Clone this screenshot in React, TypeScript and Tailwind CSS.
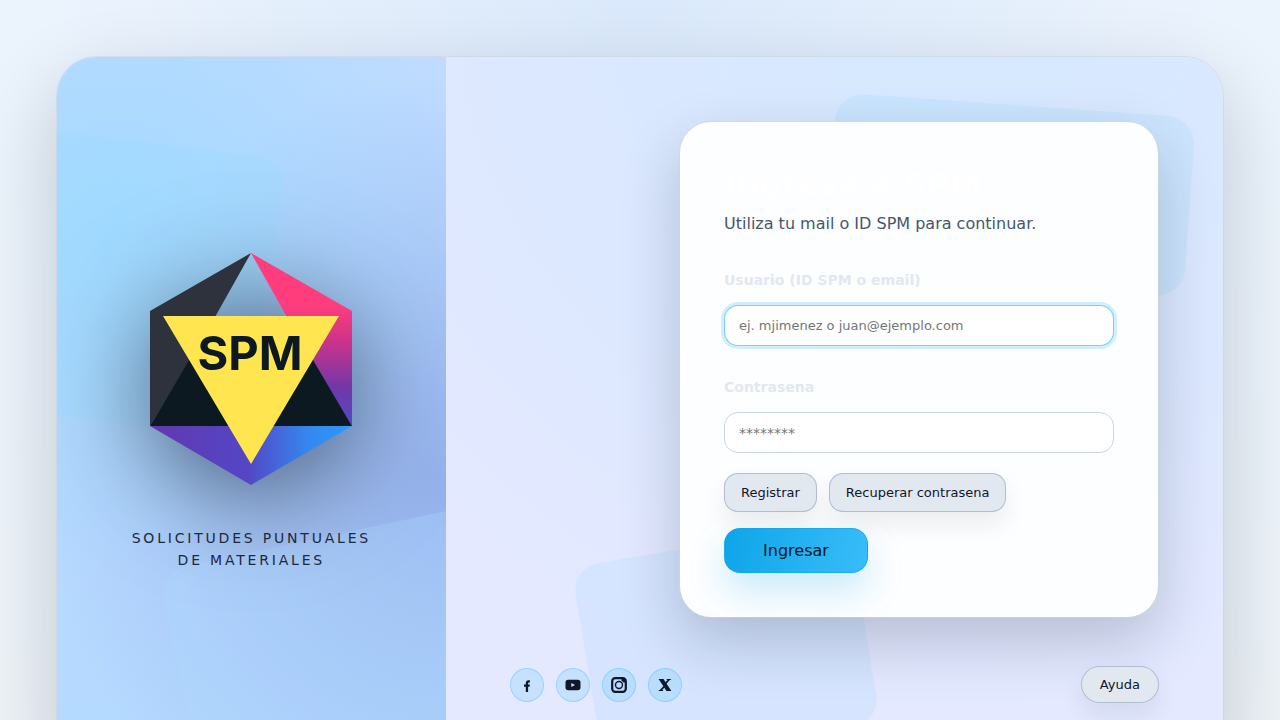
import type { ReactNode } from "react";

function Logo() {
  return (
    <svg
      viewBox="0 0 202 232"
      className="h-[232px] w-[202px] [filter:drop-shadow(0_20px_50px_rgba(15,23,42,0.6))]"
      role="img"
      aria-label="SPM"
    >
      <defs>
        <linearGradient id="pink" x1="0" y1="0" x2="0" y2="1">
          <stop offset="0.3" stopColor="#ff3d7c" />
          <stop offset="0.5" stopColor="#cf338a" />
          <stop offset="0.78" stopColor="#7038a8" />
          <stop offset="1" stopColor="#5548c8" />
        </linearGradient>
        <linearGradient id="base" x1="0" y1="0" x2="1" y2="0">
          <stop offset="0" stopColor="#6238b0" />
          <stop offset="0.48" stopColor="#5446c6" />
          <stop offset="0.78" stopColor="#3487ee" />
          <stop offset="1" stopColor="#2c9bfb" />
        </linearGradient>
      </defs>
      <polygon points="101,0 65,64 0,173 0,58" fill="#2d323d" />
      <polygon points="101,0 202,58 202,173 137,64" fill="url(#pink)" />
      <polygon points="39,107 163,107 202,173 0,173" fill="#0c1921" />
      <polygon points="0,173 202,173 101,232" fill="url(#base)" />
      <polygon points="13,63 189,63 101,211" fill="#ffe651" />
      <text
        x="100"
        y="117"
        textAnchor="middle"
        className="fill-[#0c1921] font-['Inter',sans-serif] text-[47px] font-bold"
      >
        SPM
      </text>
    </svg>
  );
}

function Social({ label, children }: { label: string; children: ReactNode }) {
  return (
    <a
      href="#"
      aria-label={label}
      className="flex size-[34px] items-center justify-center rounded-full border border-[#38bdf8]/35 bg-[#38bdf8]/18 text-slate-900"
    >
      <svg viewBox="0 0 16 16" className="size-4" fill="currentColor" aria-hidden="true">
        {children}
      </svg>
    </a>
  );
}

const fieldClass =
  "h-[41px] w-full rounded-[14px] border bg-white px-3.5 text-slate-900 outline-none placeholder:text-[#757575]";

const labelClass = "text-sm leading-[22px] font-bold text-slate-200";

const secondaryClass =
  "border border-slate-400/60 bg-slate-200 text-[13px] text-slate-900 shadow-[0_12px_24px_rgba(15,23,42,0.08)]";

export default function App() {
  return (
    <main className="min-h-screen bg-[radial-gradient(circle_at_50%_0%,#dae9fb_0%,#ebf3fd_55%,#eff3f7_100%)] p-14 font-['DejaVu_Sans',sans-serif]">
      <div className="grid grid-cols-[1fr_2fr] overflow-hidden rounded-[40px] border border-slate-300/60 bg-[#e4e8ff] bg-clip-padding shadow-[0_30px_80px_rgba(15,23,42,0.2)]">
        <section className="relative flex flex-col items-center justify-center gap-[42px] overflow-hidden bg-[radial-gradient(circle_at_15%_25%,rgba(155,217,255,0.75),transparent_55%),radial-gradient(circle_at_100%_60%,rgba(142,170,232,0.85),transparent_70%),linear-gradient(180deg,#bfdbff,#b4d9ff)]">
          <div className="absolute top-[82px] -left-[107px] h-[282px] w-[320px] rotate-[7deg] rounded-[28px] bg-[#93dcff]/20" />
          <div className="absolute top-[475px] left-[124px] h-[260px] w-[360px] -rotate-12 rounded-[28px] bg-[#b0dcff]/30" />
          <div className="relative">
            <Logo />
          </div>
          <p className="relative text-center text-sm leading-[22px] tracking-[0.2em] text-slate-800 uppercase">
            Solicitudes puntuales
            <br />
            de materiales
          </p>
        </section>

        <section className="relative flex flex-col gap-12 overflow-hidden bg-[radial-gradient(circle_at_65%_-10%,#d4e9ff_0%,#dde8ff_480px,#e4e9ff_720px)] p-16">
          <div className="absolute top-12 right-[33px] h-[180px] w-[360px] rotate-[4deg] rounded-[28px] bg-[#38bdf8]/8" />
          <div className="absolute top-[486px] left-[140px] h-[204px] w-[280px] rotate-[-9.5deg] rounded-[28px] bg-[#93d2ff]/17" />

          <form
            onSubmit={(e) => e.preventDefault()}
            className="relative flex w-full max-w-[480px] flex-col self-end rounded-[32px] border border-slate-300/60 bg-[#fdfeff] bg-clip-padding p-11 shadow-[0_24px_60px_rgba(15,23,42,0.2)]"
          >
            <h1 className="text-[32px] leading-[37px] font-bold text-white">Ingresa a SPM</h1>
            <p className="mt-[9px] text-base leading-6 text-slate-600">
              Utiliza tu mail o ID SPM para continuar.
            </p>

            <label htmlFor="user" className={`${labelClass} mt-[33px]`}>
              Usuario (ID SPM o email)
            </label>
            <input
              id="user"
              type="text"
              placeholder="ej. mjimenez o juan@ejemplo.com"
              className={`${fieldClass} mt-3.5 border-[#38bdf8]/70 text-[13px] ring-3 ring-[#0ea5e9]/18`}
            />

            <label htmlFor="password" className={`${labelClass} mt-[30px]`}>
              Contrasena
            </label>
            <input
              id="password"
              type="password"
              placeholder="********"
              className={`${fieldClass} mt-3.5 border-slate-300 text-sm`}
            />

            <div className="mt-5 flex gap-3">
              <button type="button" className={`${secondaryClass} h-[39px] rounded-[14px] px-4`}>
                Registrar
              </button>
              <button type="button" className={`${secondaryClass} h-[39px] rounded-[14px] px-4`}>
                Recuperar contrasena
              </button>
            </div>
            <button
              type="submit"
              className="mt-4 h-[45px] w-36 rounded-2xl border border-[#0ea5e9]/60 bg-[linear-gradient(100deg,#0ea5e9,#38bdf8)] text-base text-slate-900 shadow-[0_18px_36px_rgba(14,165,233,0.22)]"
            >
              Ingresar
            </button>
          </form>

          <footer className="relative flex items-center justify-between">
            <nav aria-label="Redes sociales" className="flex gap-3">
              <Social label="Facebook">
                <path d="M6.800 15V9.800H5V7.600h1.800V6.300c0-2 1-3 2.800-3h1.300v2.200h-1c-.6 0-.8.300-.8.900v1.200h1.700l-.2 2.200H9.100V15z" />
              </Social>
              <Social label="YouTube">
                <path
                  fillRule="evenodd"
                  d="M3.200 2.700h9.600A2.700 2.700 0 0 1 15.500 5.400v5.200a2.700 2.700 0 0 1-2.700 2.700H3.200A2.700 2.700 0 0 1 .5 10.600V5.400A2.700 2.700 0 0 1 3.200 2.700zM6.300 5.900v4.200L10 8z"
                />
              </Social>
              <Social label="Instagram">
                <rect x="1.200" y="1.200" width="13.600" height="13.600" rx="3" fill="none" stroke="currentColor" strokeWidth="2.200" />
                <circle cx="8" cy="8" r="3.500" fill="none" stroke="currentColor" strokeWidth="1.400" />
                <path d="M10.500 2h3.500v3.500L12.500 5.500 10.500 3.500z" />
              </Social>
              <Social label="X">
                <path d="M1.600 2h4.900l7.900 12H9.500z" />
                <path d="M9.700 2h4.100v1h-1L9 7.200l-1-1.500L10.500 3h-.8zM1.800 14v-1h1L7 8.500 8 10l-2.800 3h.9v1z" />
              </Social>
            </nav>
            <button type="button" className={`${secondaryClass} h-[37px] rounded-full px-[18px]`}>
              Ayuda
            </button>
          </footer>
        </section>
      </div>
    </main>
  );
}
